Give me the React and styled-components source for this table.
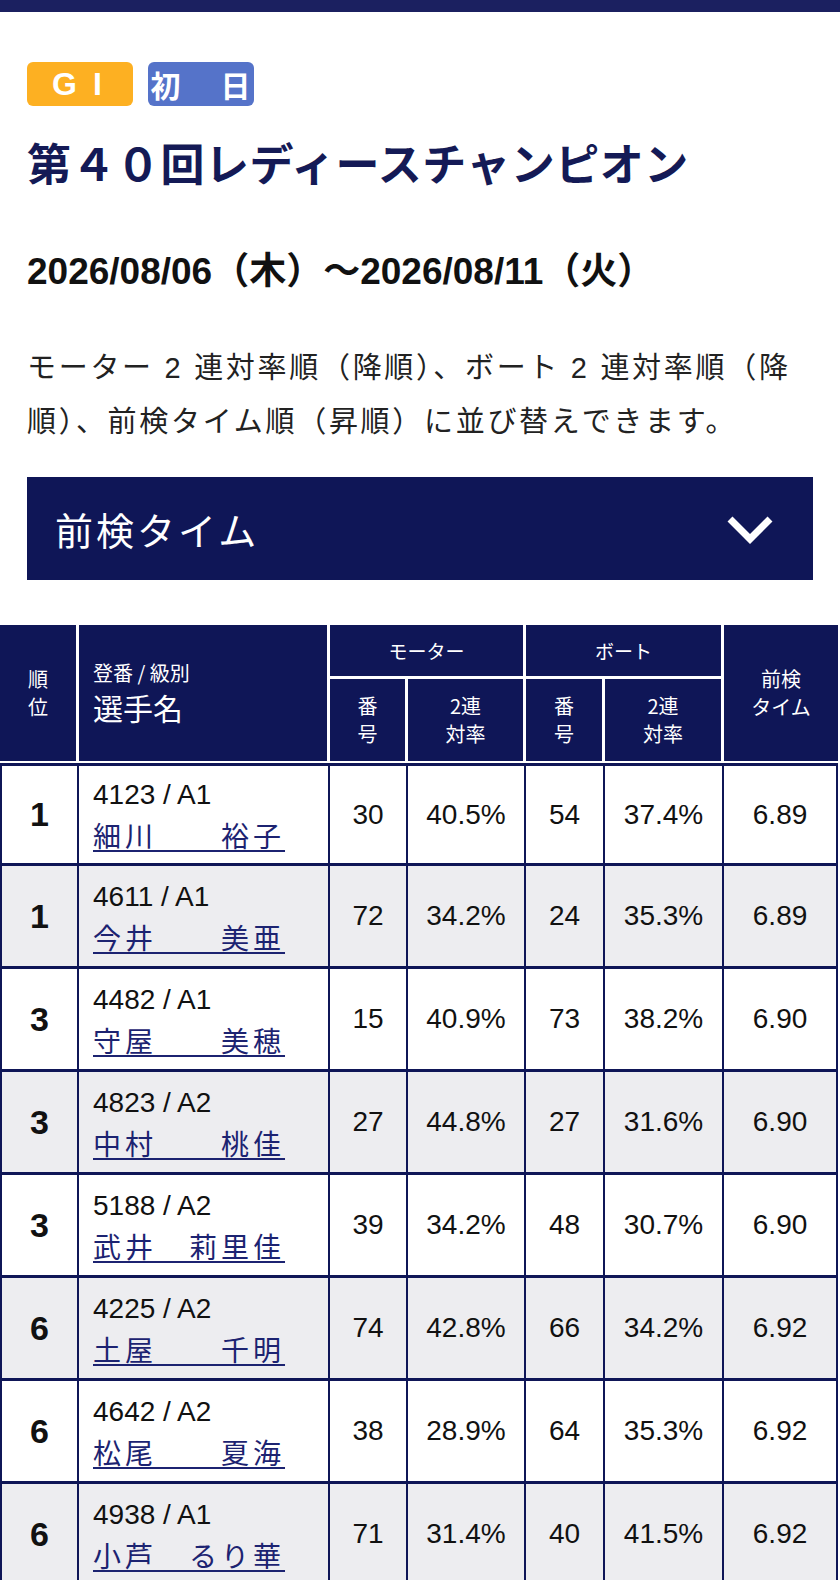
import React from 'react';
import styled, { createGlobalStyle } from 'styled-components';

const NAVY = '#0f1657';

const GlobalStyle = createGlobalStyle`
  body {
    margin: 0;
    background: #fff;
    color: #111;
    font-family: "Liberation Sans", "Noto Sans CJK JP", sans-serif;
  }
`

const Page = styled.div`
  width: 840px;
`

const TopBar = styled.div`
  height: 12px;
  background: #1b2060;
`

const Intro = styled.section`
  padding: 50px 33px 0 27px;
`

const Badges = styled.div`
  display: flex;
  gap: 15px;
`

const Badge = styled.span`
  display: inline-flex;
  align-items: center;
  justify-content: center;
  box-sizing: border-box;
  width: 106px;
  height: 44px;
  padding-left: ${p => p.$indent || 0}px;
  border-radius: 6px;
  background: ${p => p.$bg};
  color: #fff;
  white-space: nowrap;
  font-weight: 700;
  font-size: ${p => p.$size}px;
  letter-spacing: ${p => p.$spacing}px;
  font-family: "Liberation Sans", "Noto Sans CJK JP", sans-serif;
`

const Title = styled.h1`
  margin: 26px 0 0;
  color: #141a56;
  font-size: 44px;
  line-height: 60px;
  font-weight: 700;
  letter-spacing: 0.5px;
  font-family: "Noto Sans CJK JP", sans-serif;
`

const DateLine = styled.div`
  margin-top: 55px;
  font-size: 37px;
  line-height: 49px;
  font-weight: 700;
  color: #111;
`

const Note = styled.p`
  margin: 45px -20px 0 0;
  font-size: 29px;
  line-height: 54px;
  letter-spacing: 2.7px;
  color: #222;
`

const SortSelect = styled.div`
  display: flex;
  align-items: center;
  justify-content: space-between;
  margin: 28px -6px 0 0;
  height: 103px;
  padding: 0 39px 0 28px;
  background: ${NAVY};
  color: #fff;
  font-size: 38px;
  letter-spacing: 3px;
  font-family: "Noto Sans CJK JP", sans-serif;
`

const Table = styled.table`
  margin-top: 45px;
  width: 838px;
  table-layout: fixed;
  border-collapse: separate;
  border-spacing: 0;
  font-family: "Liberation Sans", "Noto Sans CJK JP", sans-serif;
`

const HeadRow = styled.tr`
  height: ${p => p.$h}px;
`

const Th = styled.th`
  padding: 0;
  background: ${NAVY};
  color: #fff;
  font-weight: 400;
  font-size: ${p => p.$size || 20}px;
  line-height: 28px;
  text-align: ${p => (p.$left ? 'left' : 'center')};
  padding-left: ${p => (p.$left ? 14 : 0)}px;
  vertical-align: middle;
  border-right: ${p => (p.$end ? 0 : 3)}px solid #fff;
  border-bottom: ${p => p.$bottom || 2}px solid #fff;
  font-family: "Noto Sans CJK JP", sans-serif;
`

const BigHead = styled.div`
  font-size: 30px;
  line-height: 40px;
`

const Row = styled.tr`
  height: 103px;
  background: ${p => (p.$alt ? '#ededf0' : '#fff')};
`

const Td = styled.td`
  padding: 0;
  text-align: center;
  vertical-align: middle;
  font-size: 28px;
  color: #111;
  border-right: 2px solid ${NAVY};
  border-bottom: 3px solid ${NAVY};
  tr:first-child > & {
    border-top: 3px solid ${NAVY};
  }
  &:first-child {
    border-left: 2px solid ${NAVY};
  }
`

const RankCell = styled(Td)`
  font-size: 34px;
  font-weight: 700;
`

const PlayerCell = styled(Td)`
  text-align: left;
  padding: 4px 0 0 14px;
  line-height: 40px;
`

const NameLink = styled.a`
  color: #1c2371;
  font-family: "Noto Sans CJK JP", sans-serif;
  letter-spacing: 4px;
  text-decoration: underline;
  text-decoration-thickness: 2px;
  text-underline-offset: 3px;
`

const rows = [
  { rank: 1, id: '4123 / A1', name: '細川　　裕子', mNo: 30, mRate: '40.5%', bNo: 54, bRate: '37.4%', time: '6.89' },
  { rank: 1, id: '4611 / A1', name: '今井　　美亜', mNo: 72, mRate: '34.2%', bNo: 24, bRate: '35.3%', time: '6.89' },
  { rank: 3, id: '4482 / A1', name: '守屋　　美穂', mNo: 15, mRate: '40.9%', bNo: 73, bRate: '38.2%', time: '6.90' },
  { rank: 3, id: '4823 / A2', name: '中村　　桃佳', mNo: 27, mRate: '44.8%', bNo: 27, bRate: '31.6%', time: '6.90' },
  { rank: 3, id: '5188 / A2', name: '武井　莉里佳', mNo: 39, mRate: '34.2%', bNo: 48, bRate: '30.7%', time: '6.90' },
  { rank: 6, id: '4225 / A2', name: '土屋　　千明', mNo: 74, mRate: '42.8%', bNo: 66, bRate: '34.2%', time: '6.92' },
  { rank: 6, id: '4642 / A2', name: '松尾　　夏海', mNo: 38, mRate: '28.9%', bNo: 64, bRate: '35.3%', time: '6.92' },
  { rank: 6, id: '4938 / A1', name: '小芦　るり華', mNo: 71, mRate: '31.4%', bNo: 40, bRate: '41.5%', time: '6.92' },
]

function Chevron() {
  return (
    <svg width="48" height="32" viewBox="0 0 48 32">
      <path d="M4 6 L24 26 L44 6" fill="none" stroke="#fff" strokeWidth="7" strokeLinejoin="miter" />
    </svg>
  )
}

export default function App() {
  return (
    <Page>
      <GlobalStyle />
      <TopBar />
      <Intro>
        <Badges>
          <Badge $bg="#fdb022" $size={32} $spacing={16} $indent={10}>GI</Badge>
          <Badge $bg="#5573c9" $size={30} $spacing={5} $indent={4}>初　日</Badge>
        </Badges>
        <Title>第４０回レディースチャンピオン</Title>
        <DateLine>2026/08/06（木）～2026/08/11（火）</DateLine>
        <Note>モーター 2 連対率順（降順）、ボート 2 連対率順（降順）、前検タイム順（昇順）に並び替えできます。</Note>
        <SortSelect>
          <span>前検タイム</span>
          <Chevron />
        </SortSelect>
      </Intro>

      <Table>
        <colgroup>
          <col style={{ width: 79 }} />
          <col style={{ width: 251 }} />
          <col style={{ width: 78 }} />
          <col style={{ width: 118 }} />
          <col style={{ width: 79 }} />
          <col style={{ width: 119 }} />
          <col style={{ width: 114 }} />
        </colgroup>
        <thead>
          <HeadRow $h={54}>
            <Th rowSpan={2}>順<br />位</Th>
            <Th rowSpan={2} $left>
              <div>登番 / 級別</div>
              <BigHead>選手名</BigHead>
            </Th>
            <Th colSpan={2} $bottom={3} $size={19}>モーター</Th>
            <Th colSpan={2} $bottom={3} $size={19}>ボート</Th>
            <Th rowSpan={2} $end>前検<br />タイム</Th>
          </HeadRow>
          <HeadRow $h={84}>
            <Th>番<br />号</Th>
            <Th>2連<br />対率</Th>
            <Th>番<br />号</Th>
            <Th>2連<br />対率</Th>
          </HeadRow>
        </thead>
        <tbody>
          {rows.map((r, i) => (
            <Row key={r.id} $alt={i % 2 === 1}>
              <RankCell>{r.rank}</RankCell>
              <PlayerCell>
                <div>{r.id}</div>
                <NameLink href="#">{r.name}</NameLink>
              </PlayerCell>
              <Td>{r.mNo}</Td>
              <Td>{r.mRate}</Td>
              <Td>{r.bNo}</Td>
              <Td>{r.bRate}</Td>
              <Td>{r.time}</Td>
            </Row>
          ))}
        </tbody>
      </Table>
    </Page>
  );
}
